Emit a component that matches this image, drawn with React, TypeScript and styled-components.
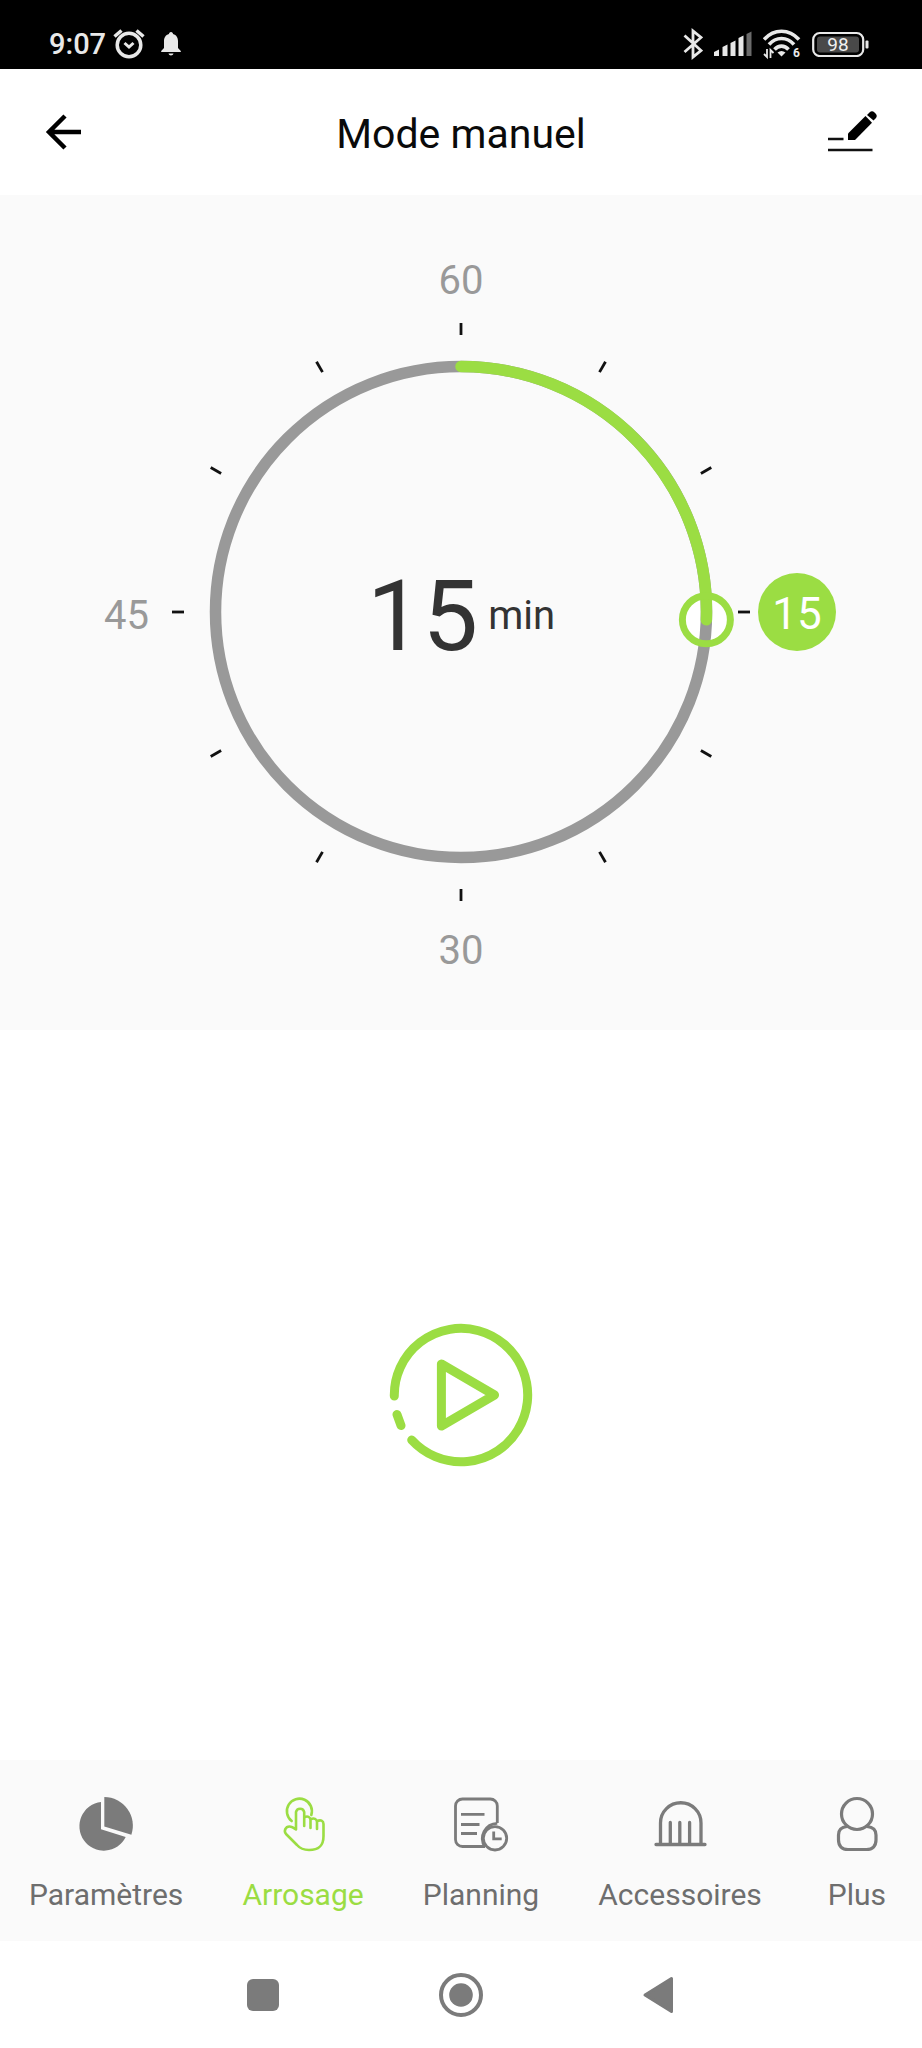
import React, { useState } from "react";
import styled, { createGlobalStyle } from "styled-components";

const GREEN = "#9bdd43";
const GREY = "#7b7b7b";

const GlobalStyle = createGlobalStyle`
  *, *::before, *::after { box-sizing: border-box; }
  body { margin: 0; background: #fff; font-family: Roboto, "Noto Sans", sans-serif; }
  svg { display: block; }
`;

const Screen = styled.div`
  display: flex;
  flex-direction: column;
  min-height: 100vh;
  background: #fff;
`;

const StatusBar = styled.div`
  display: flex;
  align-items: center;
  justify-content: space-between;
  height: 69px;
  padding: 18px 53px 0 49px;
  background: #000;
  color: #e8e8e8;
`;

const StatusGroup = styled.div<{ $gap: number }>`
  display: flex;
  align-items: center;
  gap: ${(p) => p.$gap}px;
`;

const Clock = styled.time`
  font-size: 29px;
  font-weight: 500;
  line-height: 36px;
`;

const Header = styled.header`
  display: grid;
  grid-template-columns: 1fr auto 1fr;
  align-items: center;
  height: 126px;
  padding: 0 45px;
  background: #fff;
`;

const Title = styled.h1`
  margin: 0;
  padding-top: 4px;
  font-size: 41px;
  font-weight: 400;
  line-height: 48px;
  color: #0a0a0a;
`;

const IconButton = styled.button<{ $end?: boolean }>`
  justify-self: ${(p) => (p.$end ? "end" : "start")};
  padding: 0;
  border: 0;
  background: none;
  cursor: pointer;
`;

const DialPanel = styled.section`
  display: grid;
  grid-template-columns: 1fr minmax(0, 580px) 1fr;
  align-items: center;
  row-gap: 17px;
  padding: 58px 0 55px;
  background: #fafafa;
`;

const DialLabel = styled.span<{ $side: "top" | "left" | "bottom" }>`
  grid-column: ${(p) => (p.$side === "left" ? 1 : 2)};
  justify-self: ${(p) => (p.$side === "left" ? "end" : "center")};
  margin-right: ${(p) => (p.$side === "left" ? 22 : 0)}px;
  padding-top: ${(p) => (p.$side === "top" ? 4 : 8)}px;
  font-size: 40px;
  line-height: 48px;
  color: #999;
`;

const DialFace = styled.div`
  grid-column: 2;
  display: grid;
  align-items: center;
  justify-items: center;

  > * { grid-area: 1 / 1; }
  > svg { width: 100%; height: auto; }
`;

const DialInput = styled.input`
  width: 100%;
  height: 100%;
  margin: 0;
  opacity: 0;
  cursor: pointer;
`;

const Readout = styled.output`
  display: flex;
  align-items: center;
  gap: 10px;
  padding-top: 8px;
  color: #333;
`;

const Minutes = styled.span`
  font-size: 99px;
  line-height: 116px;
`;

const Unit = styled.span`
  font-size: 40px;
  line-height: 48px;
`;

const Badge = styled.span`
  grid-column: 3;
  display: flex;
  align-items: center;
  justify-content: center;
  width: 78px;
  height: 78px;
  margin-left: 7px;
  padding-top: 4px;
  border-radius: 50%;
  background: ${GREEN};
  color: #fff;
  font-size: 44px;
  line-height: 48px;
`;

const Stage = styled.main`
  flex: 1;
  display: flex;
  align-items: center;
  justify-content: center;
  padding: 40px 0;
`;

const TabBar = styled.nav`
  display: flex;
  justify-content: space-between;
  padding: 37px 29px 28px;
  background: #fafafa;
`;

const Tab = styled.a<{ $active?: boolean }>`
  display: flex;
  flex-direction: column;
  align-items: center;
  gap: 26px;
  min-width: 72px;
  color: ${(p) => (p.$active ? GREEN : GREY)};
  text-decoration: none;
`;

const TabLabel = styled.span<{ $active?: boolean }>`
  font-size: 30px;
  line-height: 36px;
  color: ${(p) => (p.$active ? GREEN : "#6e6e6e")};
`;

const SystemNav = styled.div`
  display: flex;
  align-items: center;
  justify-content: center;
  gap: 154px;
  height: 107px;
  background: #fff;
`;

const tabs = [
  {
    label: "Paramètres",
    icon: (
      <g fill="currentColor">
        <path d="M22 5V32.3L46.7 40A24.4 24.4 0 1 1 22 5Z" />
        <path d="M25.3 0A28.7 28.7 0 0 1 52.4 37.7L25.3 29.5Z" />
      </g>
    ),
  },
  {
    label: "Arrosage",
    active: true,
    icon: (
      <g fill="none" stroke="currentColor" strokeWidth="2.6" strokeLinecap="round" strokeLinejoin="round">
        <path d="M15.7 24A12.5 12.5 0 1 1 35.3 18" />
        <path d="M20 32.5V15a4.2 4.2 0 0 1 8.2 0V29V20.5C31.5 18.5 34.5 20 34.5 23V31V22.5C38 20.5 41 22 41 25V32V24.5C44.5 22 47.5 24 47.5 27V39C47.5 49 43 53 33 53C27 53 24 51.5 21 48L10 37C7.5 34 9.5 29.5 13.5 29.5C16 29.5 18 31 20 32.5" />
      </g>
    ),
  },
  {
    label: "Planning",
    icon: (
      <g fill="none" stroke="currentColor" strokeWidth="2.8">
        <path d="M43.3 26V9A7 7 0 0 0 36.3 2H8.5A7 7 0 0 0 1.5 9V42.5A7 7 0 0 0 8.5 49.5H31" />
        <path d="M43.3 26.3A15.2 15.2 0 0 0 31 50" />
        <circle cx="41" cy="41.3" r="11.7" />
        <path d="M39.7 34.5V41.8H47.7M7 17.3H30.5M7 27.5H25.5M7 36.5H23" />
      </g>
    ),
  },
  {
    label: "Accessoires",
    icon: (
      <g fill="none" stroke="currentColor" strokeWidth="3.3" strokeLinecap="round">
        <path d="M3 47.5H52M7.5 47V26A20.25 20.25 0 0 1 48 26V47M17.3 25.5V47M26.8 25.5V47M36.6 25.5V47" />
      </g>
    ),
  },
  {
    label: "Plus",
    icon: (
      <g fill="none" stroke="currentColor" strokeWidth="3.2">
        <circle cx="27" cy="17" r="15.5" />
        <path d="M17 29.5C11 30 8.5 33 8.5 38V43C8.5 49 12 52.5 18 52.5H36.5C42.5 52.5 46 49 46 43V38C46 33 43 30 37 29.5" />
      </g>
    ),
  },
];

const RADIUS = 245.5;

function Dial({ value }: { value: number }) {
  const angle = (value / 60) * 2 * Math.PI;
  const x = RADIUS * Math.sin(angle);
  const y = -RADIUS * Math.cos(angle);
  const large = value > 30 ? 1 : 0;
  return (
    <svg viewBox="-290 -290 580 580" aria-hidden="true">
      {Array.from({ length: 12 }, (_, i) => (
        <line key={i} y1="-289" y2="-277" stroke="#111" strokeWidth="2.8" transform={`rotate(${i * 30})`} />
      ))}
      <circle cx={x} cy={y} r="24" fill="#fff" />
      <circle r={RADIUS} fill="none" stroke="#999" strokeWidth="11.5" />
      <path
        d={`M0 ${-RADIUS}A${RADIUS} ${RADIUS} 0 ${large} 1 ${x} ${y}`}
        fill="none"
        stroke={GREEN}
        strokeWidth="11.5"
        strokeLinecap="round"
      />
      <circle cx={x} cy={y} r="24" fill="none" stroke={GREEN} strokeWidth="7" />
    </svg>
  );
}

export default function App() {
  const [value, setValue] = useState(15.3);
  const minutes = Math.floor(value);

  return (
    <>
      <GlobalStyle />
      <Screen>
        <StatusBar>
          <StatusGroup $gap={7}>
            <Clock>9:07</Clock>
            <StatusGroup $gap={16}>
              <svg width="32" height="32" viewBox="0 0 32 32" fill="none" stroke="#e8e8e8" strokeWidth="3.5">
                <circle cx="16" cy="17" r="11.8" />
                <path d="M11.5 15L16 19L20.5 15" strokeWidth="3" />
                <path d="M1.5 8.5L8.5 2.5M30.5 8.5L23.5 2.5" />
              </svg>
              <svg width="20" height="25" viewBox="0 0 20 25" fill="#e8e8e8">
                <path d="M10 1C11.3 1 12 2 12 3C15.5 4 17 7 17 10V17L19.8 20V21H.2V20L3 17V10C3 7 4.5 4 8 3C8 2 8.7 1 10 1ZM7.5 22.5H12.5C12 25 8 25 7.5 22.5Z" />
              </svg>
            </StatusGroup>
          </StatusGroup>
          <StatusGroup $gap={11}>
            <svg width="20" height="32" viewBox="0 0 20 32" fill="none" stroke="#e8e8e8" strokeWidth="2.8">
              <path d="M1.5 7.5L18 22.5L10 29V3L18 9.5L1.5 24" />
            </svg>
            <svg width="38" height="26" viewBox="0 0 38 26" fill="#e8e8e8">
              <path d="M0 25V21L5 18.5V25ZM8.5 25V16L13.5 13.5V25ZM16.5 25V12L21.5 9.5V25ZM24.5 25V7L29.5 4.5V25Z" />
              <path d="M32.5 25V3L37.5 .5V25Z" fill="#6b6b6b" />
            </svg>
            <svg width="38" height="34" viewBox="0 -2 38 34">
              <g fill="none" stroke="#e8e8e8" strokeWidth="3.6">
                <path d="M1 10.5C11 -.5 26 -.5 36 10.5M6 15.5C13 7.5 24 7.5 31 15.5M11.5 20.5C15.5 16 21.5 16 25.5 20.5" />
              </g>
              <path d="M14.5 23.5Q18.5 20.5 22.5 23.5L18.5 27.5Z" fill="#e8e8e8" />
              <path d="M4 20V28L1 25M7.5 29V21L10.5 24" fill="none" stroke="#e8e8e8" strokeWidth="1.8" />
              <text x="30" y="28" fontSize="12" fontWeight="700" fill="#e8e8e8">6</text>
            </svg>
            <svg width="57" height="26" viewBox="0 0 57 26">
              <rect x="1.2" y="2" width="50" height="23" rx="6.5" fill="none" stroke="#e8e8e8" strokeWidth="2.2" />
              <rect x="5" y="5.5" width="42" height="16" rx="3" fill="#494949" />
              <rect x="53.5" y="9.5" width="3" height="8" rx="1" fill="#e8e8e8" />
              <text x="26" y="20" fontSize="19" textAnchor="middle" fill="#f0f0f0">98</text>
            </svg>
          </StatusGroup>
        </StatusBar>

        <Header>
          <IconButton type="button" aria-label="Retour">
            <svg width="36" height="36" viewBox="0 0 36 36" fill="none" stroke="#000" strokeWidth="4.5">
              <path d="M36 18H4M20 2L4 18L20 34" />
            </svg>
          </IconButton>
          <Title>Mode manuel</Title>
          <IconButton type="button" aria-label="Modifier" $end>
            <svg width="49" height="42" viewBox="0 0 49 42">
              <path d="M0 28H15.5M0 39H44.5" stroke="#111" strokeWidth="2.5" />
              <path d="M20 29V22.5L37.5 5L44 11.8L27 29Z" />
              <path d="M39 4L41.5 1.5Q44 -1 46.5 1.5L47.5 2.5Q50 5 47.5 7.5L45.5 9.5Z" />
            </svg>
          </IconButton>
        </Header>

        <DialPanel>
          <DialLabel $side="top">60</DialLabel>
          <DialLabel $side="left">45</DialLabel>
          <DialFace>
            <Dial value={value} />
            <Readout htmlFor="duration">
              <Minutes>{minutes}</Minutes>
              <Unit>min</Unit>
            </Readout>
            <DialInput
              id="duration"
              type="range"
              min={0}
              max={59.9}
              step={0.1}
              value={value}
              aria-label="Durée en minutes"
              onChange={(e) => setValue(Number(e.target.value))}
            />
          </DialFace>
          <Badge>15</Badge>
          <DialLabel $side="bottom">30</DialLabel>
        </DialPanel>

        <Stage>
          <IconButton type="button" aria-label="Démarrer">
            <svg
              width="144"
              height="144"
              viewBox="-72 -72 144 144"
              fill="none"
              stroke={GREEN}
              strokeWidth="9"
              strokeLinecap="round"
              strokeLinejoin="round"
            >
              <path d="M-66.7 1A66.7 66.7 0 1 1 -49.3 45M-64 19.5L-60 30.5M-19.6 -31V31L33.5 0Z" />
            </svg>
          </IconButton>
        </Stage>

        <TabBar>
          {tabs.map((t) => (
            <Tab key={t.label} href="#" $active={t.active} aria-current={t.active ? "page" : undefined}>
              <svg width="54" height="54" viewBox="0 0 54 54" overflow="visible">{t.icon}</svg>
              <TabLabel $active={t.active}>{t.label}</TabLabel>
            </Tab>
          ))}
        </TabBar>

        <SystemNav>
          <IconButton type="button" aria-label="Applications récentes">
            <svg width="44" height="44" viewBox="0 0 44 44">
              <rect x="6" y="6" width="32" height="32" rx="6" fill={GREY} />
            </svg>
          </IconButton>
          <IconButton type="button" aria-label="Accueil">
            <svg width="44" height="44" viewBox="0 0 44 44">
              <circle cx="22" cy="22" r="20" fill="none" stroke={GREY} strokeWidth="4" />
              <circle cx="22" cy="22" r="11.8" fill={GREY} />
            </svg>
          </IconButton>
          <IconButton type="button" aria-label="Précédent">
            <svg width="44" height="44" viewBox="0 0 44 44">
              <path d="M8 22L34.5 5.5V38.5Z" fill={GREY} stroke={GREY} strokeWidth="3" strokeLinejoin="round" />
            </svg>
          </IconButton>
        </SystemNav>
      </Screen>
    </>
  );
}
